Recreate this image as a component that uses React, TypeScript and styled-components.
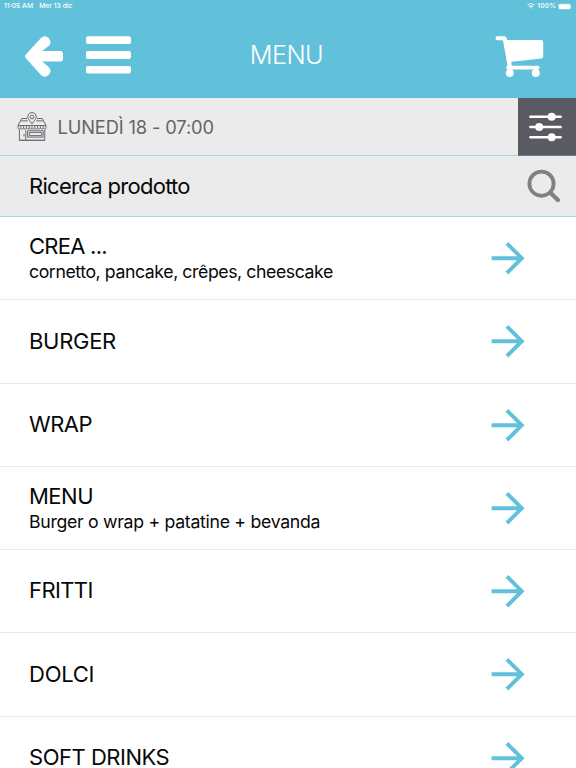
import React from "react";
import styled, { createGlobalStyle } from "styled-components";

const GlobalStyle = createGlobalStyle`
  * { box-sizing: border-box; }
  body {
    margin: 0;
    overflow: hidden;
    background: #fff;
    font-family: Inter, "Liberation Sans", sans-serif;
  }
  svg { display: block; flex: none; }
`;

const Screen = styled.div`
  width: 576px;
  height: 768px;
  overflow: hidden;
  display: flex;
  flex-direction: column;
  background: #fff;
  color: #080808;
`;

const Header = styled.header`
  flex: none;
  height: 98px;
  background: #62c1da;
  color: #fff;
`;

const StatusBar = styled.div`
  height: 12px;
  padding: 0 3px 0 4px;
  display: flex;
  align-items: center;
  justify-content: space-between;
  font-size: 6.8px;
  line-height: 12px;
  font-weight: 500;
`;

const StatusGroup = styled.div<{ $gap: number }>`
  display: flex;
  align-items: center;
  gap: ${(p) => p.$gap}px;
`;

const StatusText = styled.span<{ $tracking?: number }>`
  letter-spacing: ${(p) => p.$tracking ?? 0}px;
`;

const NavBar = styled.nav`
  height: 86px;
  padding: 0 32px 0 25px;
  display: grid;
  grid-template-columns: 1fr auto 1fr;
  align-items: center;
`;

const NavActions = styled.div<{ $end?: boolean }>`
  display: flex;
  align-items: center;
  justify-content: ${(p) => (p.$end ? "flex-end" : "flex-start")};
  padding-top: ${(p) => (p.$end ? 3 : 0)}px;
  gap: 23px;
`;

const PageTitle = styled.h1`
  margin: 0 0 0 4px;
  font-size: 25.3px;
  line-height: 30px;
  font-weight: 300;
  letter-spacing: -0.6px;
`;

const PickupBar = styled.div`
  flex: none;
  height: 58px;
  padding-left: 17px;
  display: flex;
  align-items: center;
  background: #ebebeb;
  border-bottom: 1px solid #9fd8e7;
`;

const PickupTime = styled.span`
  flex: 1;
  padding-left: 10.5px;
  font-size: 18.3px;
  line-height: 24px;
  letter-spacing: -0.13px;
  color: #64646b;
`;

const FilterButton = styled.div`
  width: 58px;
  height: 58px;
  margin-bottom: -1px;
  display: flex;
  align-items: center;
  padding-left: 11px;
  background: #5a5a63;
  border-bottom: 1px solid #5b8597;
`;

const SearchBar = styled.div`
  flex: none;
  height: 61px;
  padding: 0 15px 0 29px;
  display: flex;
  align-items: center;
  justify-content: space-between;
  background: #ebebeb;
  border-bottom: 1px solid #9fd8e7;
`;

const SearchLabel = styled.span`
  font-size: 22px;
  line-height: 28px;
  letter-spacing: -0.71px;
`;

const CategoryList = styled.ul`
  margin: 0;
  padding: 0;
  list-style: none;
`;

const CategoryRow = styled.li`
  height: 83.25px;
  padding: 0 51px 0 29px;
  display: flex;
  align-items: center;
  justify-content: space-between;
  border-bottom: 1px solid #e9e9e9;
`;

const CategoryName = styled.div<{ $tracking: number }>`
  font-size: 22px;
  line-height: 27.6px;
  letter-spacing: ${(p) => p.$tracking}px;
`;

const CategoryNote = styled.div<{ $tracking: number }>`
  font-size: 17.7px;
  line-height: 23px;
  letter-spacing: ${(p) => p.$tracking}px;
`;

const WifiIcon = () => (
  <svg width="8" height="6" viewBox="0 0 8 6" fill="none" stroke="#fff">
    <path d="M.6 2.1C2.5.3 5.5.3 7.4 2.1" strokeWidth="1.1" />
    <path d="M2 3.6c1.1-1.1 2.9-1.1 4 0" strokeWidth="1.1" />
    <path d="M2.9 4.6Q4 3.8 5.1 4.6L4 5.8z" fill="#fff" stroke="none" />
  </svg>
);

const BatteryIcon = () => (
  <svg width="15" height="7" viewBox="0 0 15 7">
    <rect x=".3" y=".8" width="12.6" height="5.6" rx="1.6" fill="#fff" opacity=".45" />
    <rect x=".9" y="1.3" width="11.4" height="4.6" rx="1.1" fill="#fff" />
    <path d="M13.5 2.7q.9.9 0 1.8z" fill="#fff" opacity=".6" />
  </svg>
);

const BackIcon = () => (
  <svg width="38" height="44" viewBox="0 0 38 44" fill="#fff">
    <path d="M1.1 21.2 16.2 4.8Q20 1.5 23.6 5.1 27.2 9 24.2 12.6L17.2 18H35q3 0 3 3v4.6q0 3-3 3H17.2l7 6q3 3.6-.6 7.4-3.6 3.5-7.4.2L1.1 25.4q-2.1-2.1 0-4.2z" />
  </svg>
);

const MenuIcon = () => (
  <svg width="45" height="38" viewBox="0 0 45 38" fill="#fff">
    <rect y=".2" width="45" height="7.8" rx="2" />
    <rect y="15.1" width="45" height="7.8" rx="2" />
    <rect y="30" width="45" height="7.6" rx="2" />
  </svg>
);

const CartIcon = () => (
  <svg width="49" height="42" viewBox="0 0 49 42" fill="#fff">
    <path d="M2.4 2.2h7.2l5.1 28" fill="none" stroke="#fff" strokeWidth="4" strokeLinecap="round" strokeLinejoin="round" />
    <path d="M10 4h36.2q2 0 2 2v14.6q0 1.7-1.9 2L14.5 25.9z" />
    <path d="M14.4 25v6" stroke="#fff" strokeWidth="3.8" />
    <path d="M13 31.6h29.8" stroke="#fff" strokeWidth="3.6" strokeLinecap="round" />
    <circle cx="14.8" cy="37" r="4" />
    <circle cx="40.8" cy="37" r="4" />
  </svg>
);

const StoreIcon = () => (
  <svg width="30" height="30" viewBox="0 0 30 30" fill="none" stroke="#6b6b72" strokeWidth="1">
    <path d="M10 6.5H4.8L1 13.5h28l-3.8-7H20M3.8 8.9h7M19.2 8.9h7" />
    <path d="M15 11.8c-1.4-2.4-4.3-4.5-4.3-7A4.3 4.3 0 0 1 19.3 4.8c0 2.5-2.9 4.6-4.3 7z" fill="#ebebeb" />
    <circle cx="15" cy="5" r="1.9" />
    <path d="M1 13.5v2.8q1.4 2 2.8 0 1.4 2 2.8 0 1.4 2 2.8 0 1.4 2 2.8 0 1.4 2 2.8 0 1.4 2 2.8 0 1.4 2 2.8 0 1.4 2 2.8 0 1.4 2 2.8 0 1.4 2 2.8 0v-2.8M3.8 13.5v3M6.6 13.5v3M9.4 13.5v3M12.2 13.5v3M15 13.5v3M17.8 13.5v3M20.6 13.5v3M23.4 13.5v3M26.2 13.5v3" />
    <path d="M2.4 17.5v10.8h25.4V17.5M2.4 28.3h25.4M8.8 28V18.5M10.6 18.8h15.6v6.3H10.6zM12.3 20.4h12.4v3.2H12.3zM7 22v2.5" />
  </svg>
);

const SlidersIcon = () => (
  <svg width="34" height="30" viewBox="0 0 34 30" stroke="#fff" strokeWidth="2.6" strokeLinecap="round">
    <path d="M1.4 4.8h30.2M1.4 15h30.2M1.4 25.2h30.2" />
    <g fill="#fff" stroke="none">
      <circle cx="22.7" cy="4.8" r="4" />
      <circle cx="10.2" cy="15" r="4" />
      <circle cx="22.7" cy="25.2" r="4" />
    </g>
  </svg>
);

const SearchIcon = () => (
  <svg width="34" height="34" viewBox="0 0 34 34" fill="none" stroke="#808080">
    <circle cx="14.5" cy="14.7" r="12.1" strokeWidth="3.8" />
    <path d="m23.2 23.4 7.7 7.7" strokeWidth="4.2" strokeLinecap="round" />
  </svg>
);

const ArrowIcon = () => (
  <svg width="34" height="34" viewBox="0 0 34 34" fill="none" stroke="#62c1da" strokeWidth="3.9">
    <path d="M.6 17.2h30M15.9 2.4 30.8 17.2 15.9 32" />
  </svg>
);

interface Category {
  name: string;
  note?: string;
  tracking: number;
  noteTracking?: number;
}

const categories: Category[] = [
  { name: "CREA ...", note: "cornetto, pancake, crêpes, cheescake", tracking: -0.75, noteTracking: -0.42 },
  { name: "BURGER", tracking: -0.3 },
  { name: "WRAP", tracking: -0.5 },
  { name: "MENU", note: "Burger o wrap + patatine + bevanda", tracking: -0.5, noteTracking: -0.3 },
  { name: "FRITTI", tracking: -0.6 },
  { name: "DOLCI", tracking: -0.25 },
  { name: "SOFT DRINKS", tracking: -0.48 },
];

export default function App() {
  return (
    <Screen>
      <GlobalStyle />
      <Header>
        <StatusBar>
          <StatusGroup $gap={6}>
            <StatusText>11:05 AM</StatusText>
            <StatusText>Mer 13 dic</StatusText>
          </StatusGroup>
          <StatusGroup $gap={2}>
            <WifiIcon />
            <StatusText $tracking={0.1}>100%</StatusText>
            <BatteryIcon />
          </StatusGroup>
        </StatusBar>
        <NavBar>
          <NavActions>
            <BackIcon />
            <MenuIcon />
          </NavActions>
          <PageTitle>MENU</PageTitle>
          <NavActions $end>
            <CartIcon />
          </NavActions>
        </NavBar>
      </Header>
      <PickupBar>
        <StoreIcon />
        <PickupTime>LUNEDÌ 18 - 07:00</PickupTime>
        <FilterButton>
          <SlidersIcon />
        </FilterButton>
      </PickupBar>
      <SearchBar>
        <SearchLabel>Ricerca prodotto</SearchLabel>
        <SearchIcon />
      </SearchBar>
      <CategoryList>
        {categories.map((c) => (
          <CategoryRow key={c.name}>
            <div>
              <CategoryName $tracking={c.tracking}>{c.name}</CategoryName>
              {c.note && <CategoryNote $tracking={c.noteTracking ?? 0}>{c.note}</CategoryNote>}
            </div>
            <ArrowIcon />
          </CategoryRow>
        ))}
      </CategoryList>
    </Screen>
  );
}
